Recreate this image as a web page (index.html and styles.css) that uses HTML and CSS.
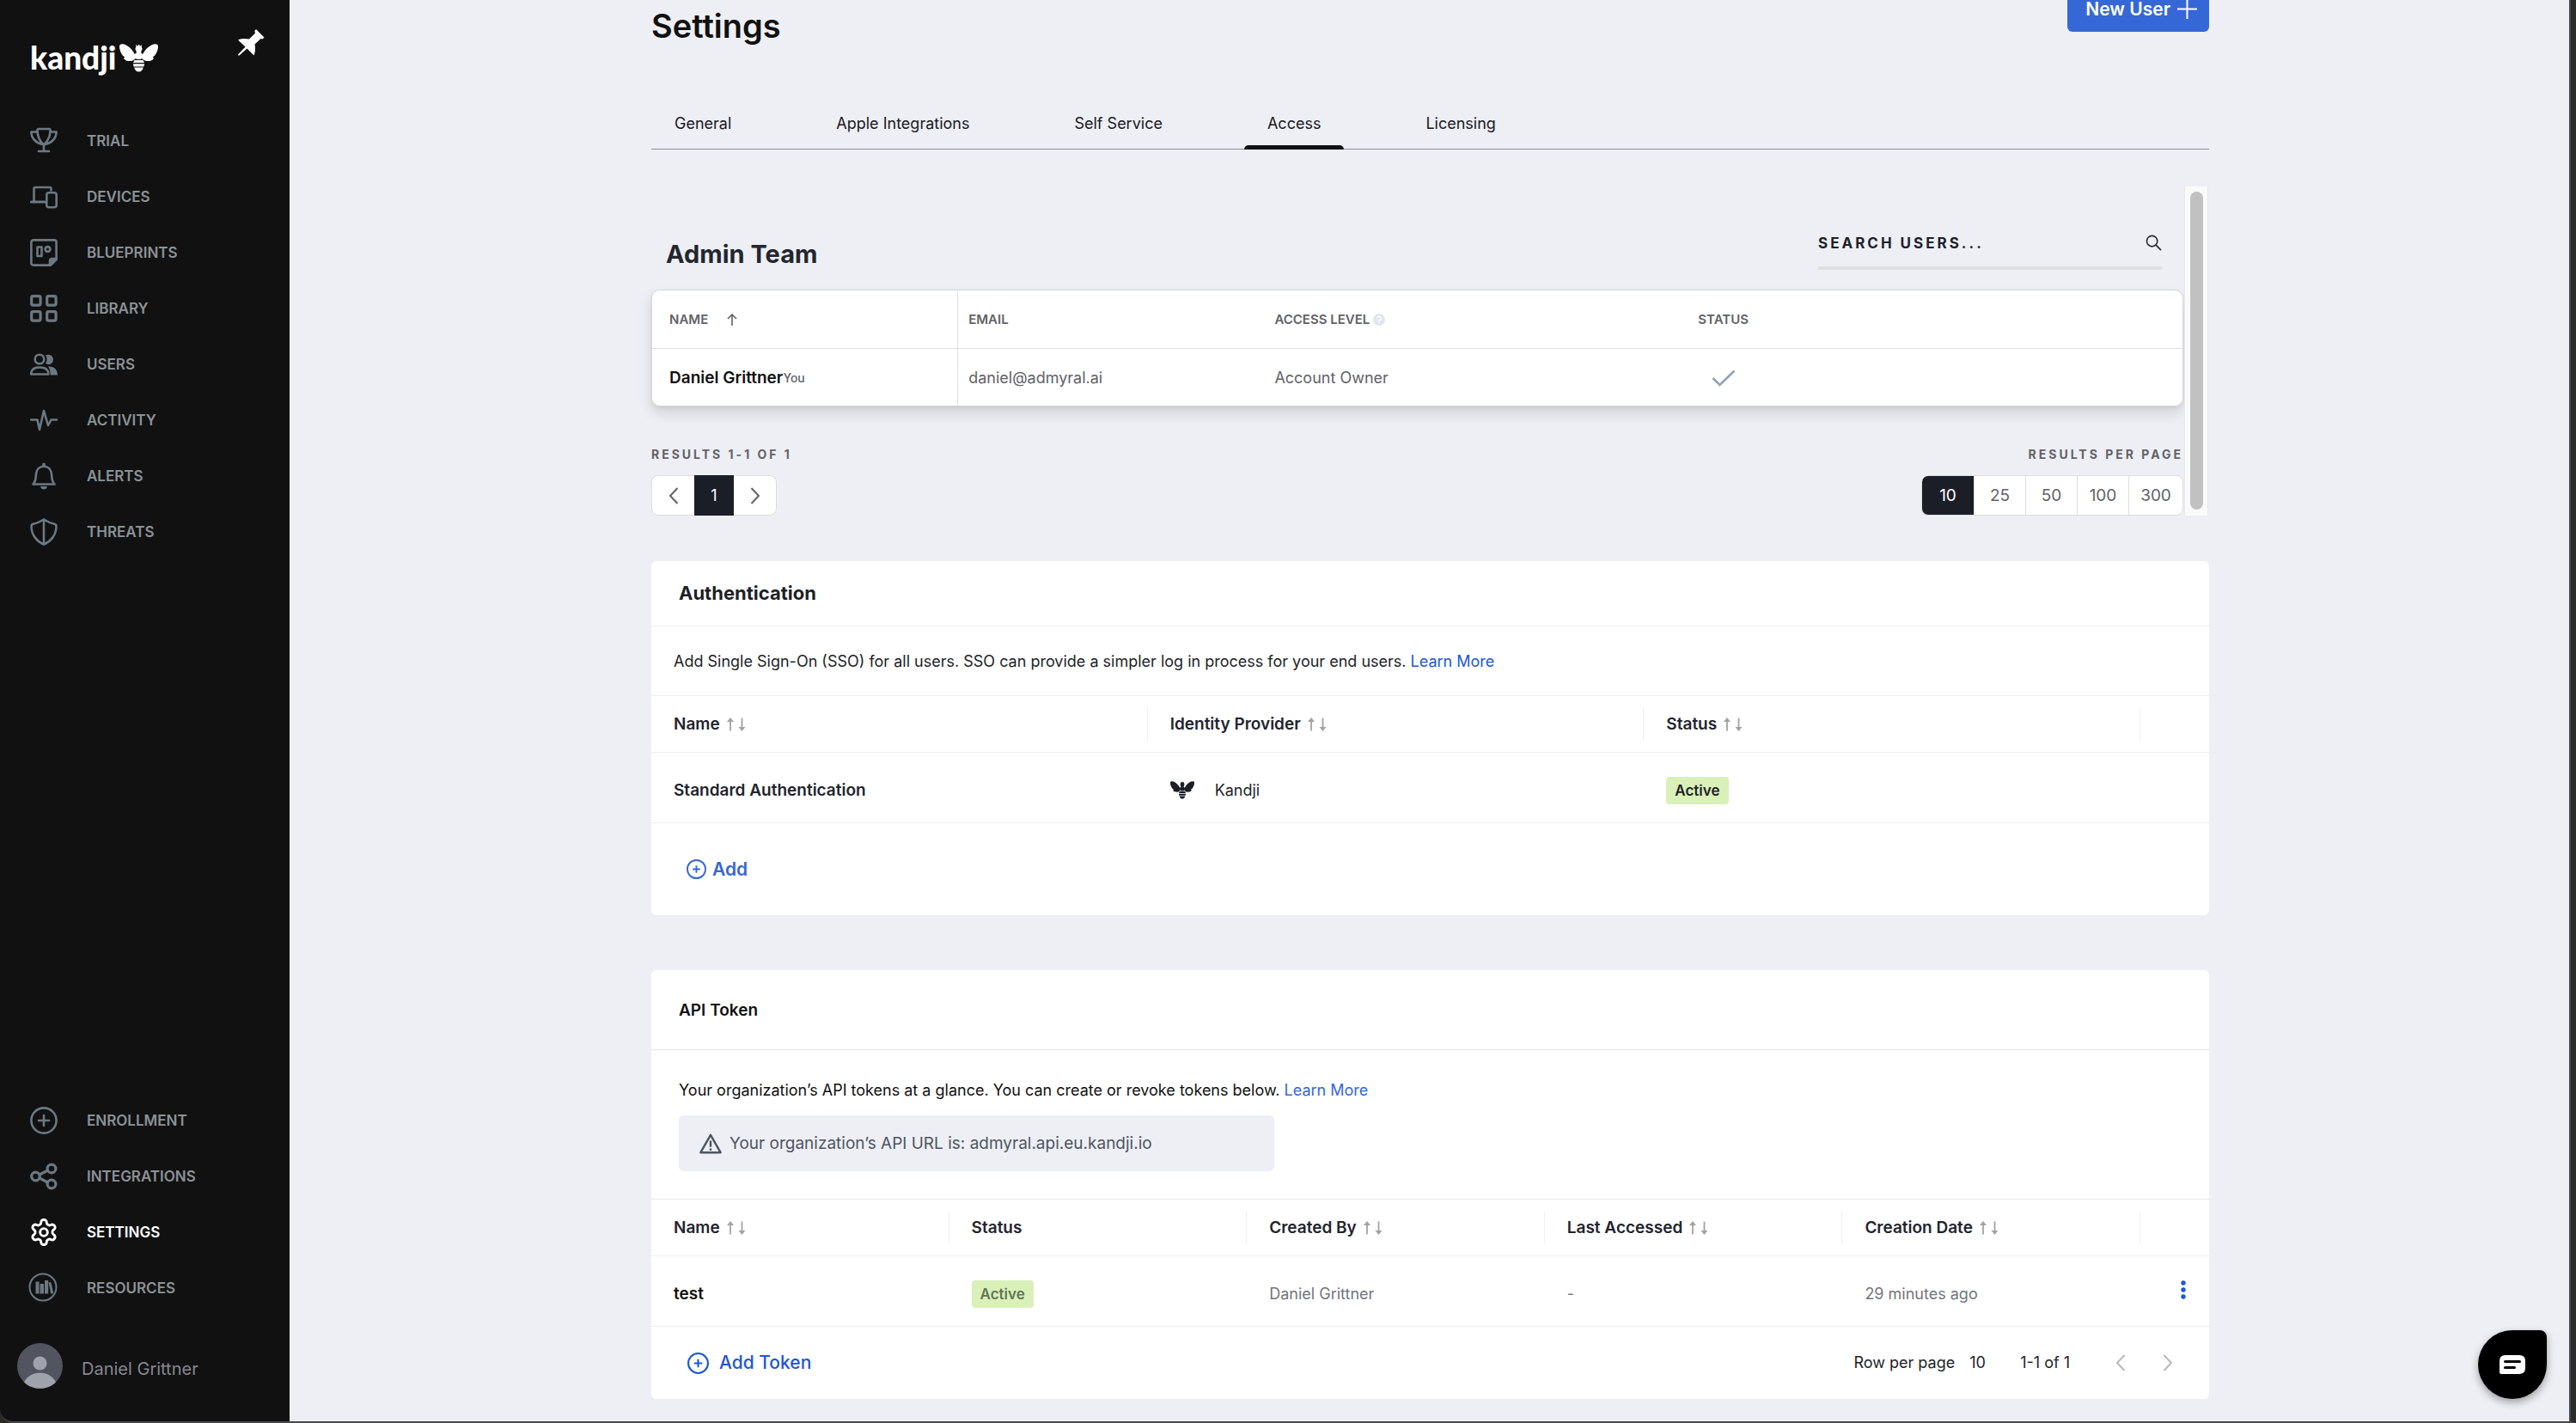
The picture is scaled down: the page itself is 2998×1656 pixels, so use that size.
FILE: index.html
```html
<!DOCTYPE html>
<html lang="en">
<head>
<meta charset="utf-8">
<meta name="viewport" content="width=device-width, initial-scale=1">
<title>Settings – Access</title>
<link rel="stylesheet" href="styles.css">
</head>
<body>
<svg class="sprite" aria-hidden="true">
  <symbol id="bee" viewBox="0 0 45 33">
    <path d="M0 3C0 .5 2 0 4 .2 10 1 17 8 19 15c.4 2-.5 3-2 3.400-2 2-8 2.600-11-.2-1.500-1.400-.6-2.400.6-2.600C3 14 0 8 0 3ZM45 3c0-2.500-2-3-4-2.800C35 1 28 8 26 15c-.4 2 .5 3 2 3.400 2 2 8 2.600 11-.2 1.500-1.400.6-2.400-.6-2.600C42 14 45 8 45 3Z"/>
    <path d="M19.500.8l1.500 2.200.9-2h1.200l.9 2L25.500.8l.5 4c1 .8.6 2.200-.4 2.800.4 1-.3 2-1 2.400 2 .9 3 2.500 2.500 4.500l-2 3.500h-5.200l-2-3.500c-.5-2 .5-3.600 2.500-4.500-.7-.4-1.400-1.400-1-2.400-1-.6-1.400-2-.4-2.800Z"/>
    <path d="M17.500 19h10l1.500 3H16ZM16 23.200h13l-.5 3.200h-12ZM17.200 27.600h10.600C27 31 25 32.600 22.500 32.600S18 31 17.200 27.600Z"/>
  </symbol>
  <symbol id="sort" viewBox="0 0 22 16">
    <path d="M4 3v12.500M17.500 .5V13" fill="none" stroke="#a3a3a6" stroke-width="1.800"/>
    <path d="M0 5 4 0l4 5ZM13.500 11h8L17.500 16Z" fill="#a3a3a6"/>
  </symbol>
  <symbol id="left" viewBox="0 0 12 20"><path d="M10.500 1 2 10l8.500 9" fill="none" stroke="currentColor" stroke-width="2"/></symbol>
  <symbol id="right" viewBox="0 0 12 20"><path d="M1.500 1 10 10l-8.500 9" fill="none" stroke="currentColor" stroke-width="2"/></symbol>
  <symbol id="plus-circle" viewBox="0 0 24 24"><path d="M12 7.500v9M7.500 12h9M23 12a11 11 0 1 1-22 0 11 11 0 0 1 22 0Z" fill="none" stroke="currentColor" stroke-width="2"/></symbol>
</svg>

<div class="app">
  <aside class="sidebar">
    <div class="brand">
      <a class="logo" href="#">kandji<svg class="logo-bee"><use href="#bee"/></svg></a>
      <button class="pin" type="button" aria-label="Pin menu">
        <svg viewBox="0 0 31 31"><path d="M21 0 30.500 9.500 28.500 11.500 26.500 11 19.500 17.500C20.500 22 20 27 18.500 30.500L10.500 22.500 1.500 30.500.2 30.500.2 29.300 8.500 20.500 0 12.500C4 10.800 9 10.600 13 11.500L20 4.500 19.300 2Z" fill="#fff"/></svg>
      </button>
    </div>
    <nav class="menu" aria-label="Main">
      <a href="#"><svg viewBox="0 0 32 32"><path d="M8.500 3.200q0-1.200 1.200-1.200h12.600q1.200 0 1.200 1.200C23.500 12 20 17 16 20.500 12 17 8.500 12 8.500 3.200ZM8.500 5.500H1.400C1.400 13 7 18.500 14.500 20M23.500 5.500h7.100C30.600 13 25 18.500 17.500 20M16 20.500V28M10 28h12"/></svg>TRIAL</a>
      <a href="#"><svg viewBox="0 0 32 32"><path d="M4.500 20.500V6.500q0-1.500 1.500-1.500h17q1.500 0 1.500 1.500V8.500"/><path d="M1.500 22H17" stroke-width="3.200"/><rect x="19.300" y="11.300" width="11.400" height="17" rx="2.500"/></svg>DEVICES</a>
      <a href="#"><svg viewBox="0 0 32 32"><path d="M4 1.400h24q2.600 0 2.600 2.600v20L24 30.600H4Q1.400 30.600 1.400 28V4Q1.400 1.400 4 1.400ZM8.500 9.500h5v10.500h-5Z"/><circle cx="20.500" cy="12" r="2.900"/><path d="M30.600 23 23 30.600V25.500Q23 23 25.500 23Z" class="solid"/></svg>BLUEPRINTS</a>
      <a href="#"><svg class="bold" viewBox="0 0 32 32"><rect x="1.700" y="1.700" width="10.400" height="10.400" rx="1.800"/><rect x="19.700" y="1.700" width="10.400" height="10.400" rx="1.800"/><rect x="1.700" y="19.700" width="10.400" height="10.400" rx="1.800"/><rect x="19.700" y="19.700" width="10.400" height="10.400" rx="1.800"/></svg>LIBRARY</a>
      <a href="#"><svg viewBox="0 0 32 32"><circle cx="11" cy="10" r="5.300"/><path d="M1.200 27.500C1.200 22 5 19.500 11 19.500s10.300 2.500 10.300 8Z"/><path class="solid" stroke="none" d="M18 5.500c5-2.500 9 1 9 5s-4.500 7.500-9 4.500q1.500-2 1.500-4.800T18 5.500ZM21 18.500c7-.5 11 3.500 11 10h-8.500c.3-4-.5-7-2.500-10Z"/></svg>USERS</a>
      <a href="#"><svg viewBox="0 0 32 32"><path d="M1.200 15.500H8.500L11 27 16 5l5 17 3.500-6.500H31"/></svg>ACTIVITY</a>
      <a href="#"><svg viewBox="0 0 32 32"><path d="M3.500 25.500C7 22 6.500 18 7 13.500 7.500 8 11 4.800 16 4.800s8.500 3.200 9 8.700c.5 4.500 0 8.500 3.500 12Z"/><path class="solid" stroke="none" d="M14 4.500q0-4 2-4t2 4ZM12 28h8q-1 3.600-4 3.600T12 28Z"/></svg>ALERTS</a>
      <a href="#"><svg viewBox="0 0 32 32"><path d="M16 1.500C12 4 7.500 5.800 3.800 6.800 1.500 7.500 1.500 8 1.600 11 2 19.500 7.500 27 16 30.600 24.500 27 30 19.500 30.400 11c.1-3 .1-3.500-2.200-4.200C24.500 5.800 20 4 16 1.500ZM16 1.500V30.600"/></svg>THREATS</a>
    </nav>
    <nav class="menu menu-bottom" aria-label="Secondary">
      <a href="#"><svg viewBox="0 0 32 32"><circle cx="16" cy="16" r="14.600"/><path d="M16 10v12M10 16h12"/></svg>ENROLLMENT</a>
      <a href="#"><svg class="bold" viewBox="0 0 32 32"><circle cx="6.500" cy="16" r="4.800"/><circle cx="25" cy="7" r="4.900"/><circle cx="25" cy="25" r="4.900"/><path d="M11 14l9.500-5M11 18l9.500 5"/></svg>INTEGRATIONS</a>
      <a href="#" class="current" aria-current="page"><svg viewBox="1 1 22 22"><path d="M12.220 2h-.44a2 2 0 0 0-2 2v.18a2 2 0 0 1-1 1.730l-.43.25a2 2 0 0 1-2 0l-.15-.08a2 2 0 0 0-2.730.73l-.22.38a2 2 0 0 0 .73 2.730l.15.1a2 2 0 0 1 1 1.720v.51a2 2 0 0 1-1 1.740l-.15.09a2 2 0 0 0-.73 2.730l.22.38a2 2 0 0 0 2.730.73l.15-.08a2 2 0 0 1 2 0l.43.25a2 2 0 0 1 1 1.730V20a2 2 0 0 0 2 2h.44a2 2 0 0 0 2-2v-.18a2 2 0 0 1 1-1.730l.43-.25a2 2 0 0 1 2 0l.15.08a2 2 0 0 0 2.730-.73l.22-.39a2 2 0 0 0-.73-2.730l-.15-.08a2 2 0 0 1-1-1.740v-.5a2 2 0 0 1 1-1.740l.15-.09a2 2 0 0 0 .73-2.730l-.22-.38a2 2 0 0 0-2.730-.73l-.15.08a2 2 0 0 1-2 0l-.43-.25a2 2 0 0 1-1-1.730V4a2 2 0 0 0-2-2z"/><circle cx="12" cy="12" r="3"/></svg>SETTINGS</a>
      <a href="#"><svg viewBox="0 0 32 32"><circle cx="15" cy="15" r="15.500" stroke-width="2"/><path class="solid" stroke="none" d="M6.500 8.500h4V22.500h-4ZM11.500 11h4.500V22.500h-4.500ZM17 7h4.200V22.500H17ZM21.500 9.500l2.800-.6 3 13-3 .8Z"/></svg>RESOURCES</a>
    </nav>
    <a class="user" href="#">
      <svg viewBox="0 0 53 53"><circle cx="26.500" cy="26.500" r="26.500" fill="#525460"/><circle cx="26.500" cy="23.500" r="8" fill="#9fa1ab"/><path d="M8 45.500C12 38 19 34.500 26.500 34.500S41 38 45 45.500C35 55.300 18 55.300 8 45.500Z" fill="#9fa1ab"/></svg>
      <span>Daniel Grittner</span>
    </a>
  </aside>

  <main class="main">
    <div class="content">
      <header class="page-head">
        <h1>Settings</h1>
        <button class="new-user" type="button">New User<svg viewBox="0 0 23 23"><path d="M11.500 0v23M0 11.500h23" stroke="#fff" stroke-width="2"/></svg></button>
      </header>

      <nav class="tabs" aria-label="Settings sections">
        <a href="#">General</a>
        <a href="#">Apple Integrations</a>
        <a href="#">Self Service</a>
        <a href="#" class="active" aria-current="page">Access</a>
        <a href="#">Licensing</a>
      </nav>

      <section class="team">
        <div class="team-body">
          <div class="toolbar">
            <h2>Admin Team</h2>
            <label class="search">
              <input type="search" placeholder="SEARCH USERS..." aria-label="Search users">
              <svg viewBox="0 0 20 20"><circle cx="8" cy="8" r="6.500"/><path d="M12.700 12.700 19 19"/></svg>
            </label>
          </div>
          <table class="team-table">
            <thead>
              <tr>
                <th>NAME<svg class="asc" viewBox="0 0 12 14"><path d="M6 14V1M1 6l5-5 5 5"/></svg></th>
                <th>EMAIL</th>
                <th>ACCESS LEVEL<svg class="help" viewBox="0 0 14 14"><circle cx="7" cy="7" r="7" fill="#dfe6ef"/><path d="M4.900 5.400a2.100 2.100 0 1 1 3 1.900q-.9.500-.9 1.400M7 9.800v1.500" fill="none" stroke="#fff" stroke-width="1.600"/></svg></th>
                <th class="mid">STATUS</th>
                <th></th>
              </tr>
            </thead>
            <tbody>
              <tr>
                <td><span class="person">Daniel Grittner<small>You</small></span></td>
                <td>daniel@admyral.ai</td>
                <td>Account Owner</td>
                <td class="mid"><svg class="check" viewBox="0 0 28 20"><path d="M1.500 10 9.500 18 26.500 1.500"/></svg></td>
                <td></td>
              </tr>
            </tbody>
          </table>
          <div class="paging">
            <div class="paging-group">
              <span class="caption">RESULTS 1-1 OF 1</span>
              <div class="pager">
                <button type="button" aria-label="Previous page"><svg><use href="#left"/></svg></button>
                <button type="button" class="on">1</button>
                <button type="button" aria-label="Next page"><svg><use href="#right"/></svg></button>
              </div>
            </div>
            <div class="paging-group end">
              <span class="caption">RESULTS PER PAGE</span>
              <div class="sizes">
                <button type="button" class="on">10</button>
                <button type="button">25</button>
                <button type="button">50</button>
                <button type="button">100</button>
                <button type="button">300</button>
              </div>
            </div>
          </div>
        </div>
        <div class="track"><div class="thumb"></div></div>
      </section>

      <section class="card auth">
        <h2>Authentication</h2>
        <p class="lead">Add Single Sign-On (SSO) for all users. SSO can provide a simpler log in process for your end users. <a href="#">Learn More</a></p>
        <table class="grid">
          <thead>
            <tr>
              <th><button type="button">Name<svg><use href="#sort"/></svg></button></th>
              <th><button type="button">Identity Provider<svg><use href="#sort"/></svg></button></th>
              <th><button type="button">Status<svg><use href="#sort"/></svg></button></th>
              <th class="tail"></th>
            </tr>
          </thead>
          <tbody>
            <tr>
              <td class="strong">Standard Authentication</td>
              <td><span class="provider"><svg><use href="#bee"/></svg>Kandji</span></td>
              <td><span class="badge">Active</span></td>
              <td></td>
            </tr>
          </tbody>
        </table>
        <div class="auth-foot">
          <button class="add" type="button"><svg><use href="#plus-circle"/></svg>Add</button>
        </div>
      </section>

      <section class="card api">
        <h2>API Token</h2>
        <div class="api-intro">
          <p>Your organization’s API tokens at a glance. You can create or revoke tokens below. <a href="#">Learn More</a></p>
          <div class="notice">
            <svg viewBox="0 0 26 24"><path d="M13 1.800 24.600 22.200H1.400ZM13 8.500v7.200M13 17.500v2.400"/></svg>
            Your organization’s API URL is: admyral.api.eu.kandji.io
          </div>
        </div>
        <table class="grid muted">
          <thead>
            <tr>
              <th><button type="button">Name<svg><use href="#sort"/></svg></button></th>
              <th>Status</th>
              <th><button type="button">Created By<svg><use href="#sort"/></svg></button></th>
              <th><button type="button">Last Accessed<svg><use href="#sort"/></svg></button></th>
              <th><button type="button">Creation Date<svg><use href="#sort"/></svg></button></th>
              <th class="tail"></th>
            </tr>
          </thead>
          <tbody>
            <tr>
              <td class="strong">test</td>
              <td><span class="badge">Active</span></td>
              <td>Daniel Grittner</td>
              <td>-</td>
              <td>29 minutes ago</td>
              <td class="actions"><button type="button" aria-label="Token actions"><svg viewBox="0 0 6 22"><circle cx="3" cy="3" r="2.700"/><circle cx="3" cy="11" r="2.700"/><circle cx="3" cy="19" r="2.700"/></svg></button></td>
            </tr>
          </tbody>
        </table>
        <div class="api-foot">
          <button class="add-token" type="button"><svg><use href="#plus-circle"/></svg>Add Token</button>
          <div class="rows">
            <label for="rows">Row per page</label>
            <select id="rows"><option>10</option></select>
            <span class="range">1-1 of 1</span>
            <button type="button" aria-label="Previous page"><svg><use href="#left"/></svg></button>
            <button type="button" aria-label="Next page"><svg><use href="#right"/></svg></button>
          </div>
        </div>
      </section>
    </div>
  </main>
</div>

<button class="chat" type="button" aria-label="Open chat">
  <svg viewBox="0 0 30 22"><path d="M7 0h16q7 0 7 7v8q0 7-7 7H2q-2 0-2-2V7Q0 0 7 0Z" fill="#fff"/><path d="M6.500 7.500h17M6.500 14.500h11" stroke="#000" stroke-width="3" stroke-linecap="round"/></svg>
</button>
</body>
</html>
```
FILE: styles.css
```css
* { box-sizing: border-box; }

body {
  margin: 0;
  background: #2b2a22;
  color: #1d1f27;
  font: 400 18px/24px Inter, "Liberation Sans", sans-serif;
}

h1, h2, p { margin: 0; }
a { color: #2257d6; text-decoration: none; }
button, input, select { font: inherit; color: inherit; margin: 0; padding: 0; border: 0; background: none; }
button { cursor: pointer; }
svg { display: block; flex: none; }
.sprite { position: absolute; width: 0; height: 0; }

.app {
  display: flex;
  min-height: 100vh;
  border-bottom: 2px solid #4a4a4c;
  border-right: 6px solid #2b2b2b;
  border-bottom-left-radius: 16px;
  overflow: hidden;
}

/* Sidebar */
.sidebar {
  display: flex;
  flex-direction: column;
  flex: none;
  width: 337px;
  padding: 44px 29px 38px 0;
  background: #111;
}
.brand { display: flex; justify-content: space-between; align-items: flex-start; padding-left: 35px; }
.logo { display: flex; align-items: center; gap: 4px; color: #fff; font: 900 37px/46px Lato, sans-serif; }
.logo-bee { width: 45px; height: 33px; fill: #fff; }
.pin { margin-top: -10px; }
.pin svg { width: 31px; height: 31px; }
.menu { margin-top: 41px; padding-left: 35px; }
.menu a {
  display: flex;
  align-items: center;
  gap: 34px;
  height: 65px;
  color: #8c9297;
  font-size: 17px;
  font-weight: 600;
}
.menu svg {
  width: 32px;
  height: 32px;
  fill: none;
  stroke: #6c7882;
  stroke-width: 2.6;
  stroke-linejoin: round;
  stroke-linecap: round;
  overflow: visible;
}
.menu .bold { stroke-width: 3.2; }
.menu .solid { fill: #6c7882; }
.menu a.current { color: #fff; }
.menu .current svg { stroke: #fff; stroke-width: 2; }
.menu-bottom { margin-top: auto; }
.user { display: flex; align-items: center; gap: 22px; margin-top: 32px; padding-left: 20px; color: #868790; font-size: 20px; }
.user svg { width: 53px; height: 53px; }
.user span { padding-top: 7px; }

/* Page */
.main { flex: 1; padding: 0 40px 26px 42px; background: #eeeff5; border-right: 2px solid #454547; }
.content { max-width: 1813px; margin: 0 auto; }

.page-head { display: flex; justify-content: space-between; align-items: flex-start; height: 53px; margin-top: -16px; }
.page-head h1 { padding-top: 22px; color: #111; font-size: 38px; font-weight: 600; line-height: 48px; }
.new-user {
  display: flex;
  align-items: center;
  gap: 8px;
  height: 53px;
  padding: 0 14px 0 21px;
  border-radius: 6px;
  background: #3667d6;
  color: #fff;
  font-size: 21px;
  font-weight: 600;
  line-height: 20px;
}
.new-user svg { width: 23px; height: 23px; }

.tabs { display: flex; gap: 68px; margin-top: 95px; border-bottom: 1px solid #8f8f99; }
.tabs a { position: relative; padding: 0 27px 17px; color: #17181c; }
.tabs .active::after {
  content: "";
  position: absolute;
  inset: auto 0 -1px;
  height: 5px;
  border-radius: 5px 5px 0 0;
  background: #111;
}

/* Admin team */
.team { display: flex; margin-top: 43px; }
.team-body { flex: 1; }
.track { width: 28px; margin-left: 1px; margin-right: 1px; padding: 6px 5px 7px 6px; background: #fafafa; border: solid #e8e8e8; border-width: 0 1px; }
.thumb { height: 100%; border-radius: 8px; background: #c1c1c1; }

.toolbar { display: flex; justify-content: space-between; align-items: flex-end; padding: 49px 25px 23px 17px; }
.toolbar h2 { color: #24262f; font-size: 29px; font-weight: 700; line-height: 36px; }
.search { display: flex; justify-content: space-between; width: 400px; padding-bottom: 10px; border-bottom: 4px solid #dfdfdf; }
.search input { flex: 1; min-width: 0; height: 34px; outline: 0; font-size: 17px; font-weight: 700; letter-spacing: 3px; }
.search input::placeholder { color: #1d1f2b; opacity: 1; }
.search svg { width: 19px; height: 19px; margin-top: 7px; fill: none; stroke: #2b2d35; stroke-width: 1.8; }

.team-table {
  width: 100%;
  table-layout: fixed;
  border-spacing: 0;
  border: 1px solid #d6d7dc;
  border-radius: 10px;
  background: #fff;
  color: #626266;
  box-shadow: 0 8px 16px rgba(0, 0, 0, .12), 0 2px 4px rgba(0, 0, 0, .06);
}
.team-table th, .team-table td { padding: 0 12px; text-align: left; white-space: nowrap; }
.team-table th { height: 68px; border-bottom: 1px solid #dddde0; font-size: 15px; font-weight: 600; }
.team-table td { height: 66px; padding-top: 2px; }
.team-table tr > :first-child { padding-left: 20px; border-right: 1px solid #e0e0e3; }
.team-table .mid { text-align: center; }
.team-table th svg { display: inline-block; vertical-align: middle; }
.asc { width: 12px; height: 14px; margin-left: 22px; fill: none; stroke: #626266; stroke-width: 1.6; }
.help { width: 14px; height: 14px; margin-left: 4px; }
.check { width: 28px; height: 20px; margin: 0 auto; fill: none; stroke: #8ea3b8; stroke-width: 2.6; }
.person { display: flex; align-items: center; color: #111; font-size: 19px; font-weight: 600; }
.person small { color: #626266; font-size: 14px; font-weight: 500; line-height: 24px; }

.paging { display: flex; justify-content: space-between; margin-top: 46px; }
.paging-group { display: flex; flex-direction: column; align-items: flex-start; gap: 14px; }
.paging-group.end { align-items: flex-end; }
.caption { color: #626266; font-size: 14px; font-weight: 700; line-height: 20px; letter-spacing: 3px; }
.pager, .sizes { display: flex; height: 47px; border: 1px solid #dcdde0; border-radius: 8px; background: #fff; color: #626266; }
.pager button { width: 49px; }
.pager svg { width: 12px; height: 20px; margin: 0 auto; }
.pager .on { width: 46px; margin: -1px 0; }
.sizes { overflow: hidden; font-size: 19px; }
.sizes button { width: 60px; }
.sizes button + button { border-left: 1px solid #dcdde0; }
.sizes button:last-child { width: 63px; }
.pager .on, .sizes .on { background: #1c1e27; color: #fff; }

/* Cards */
.card { border-radius: 6px; background: #fff; }
.card h2 { padding: 0 32px; border-bottom: 1px solid #efeff1; }
.auth { margin-top: 53px; }
.auth h2 { font-size: 22px; font-weight: 700; line-height: 75px; }
.lead { padding: 29px 26px 27px; border-bottom: 1px solid #efeff1; }
.api { margin-top: 64px; }
.api h2 { padding-top: 2px; border-color: #e5e6ea; color: #111; font-size: 19px; font-weight: 600; line-height: 90px; }
.api-intro { padding: 35px 32px 32px; border-bottom: 1px solid #e5e6ea; color: #111; }
.api-intro a { color: #3667d6; }
.notice {
  display: flex;
  align-items: center;
  gap: 9px;
  max-width: 693px;
  height: 65px;
  margin-top: 17px;
  padding: 0 24px;
  border-radius: 6px;
  background: #eeeff5;
  color: #4d5560;
  font-size: 19px;
}
.notice svg { width: 26px; height: 24px; fill: none; stroke: #4d5560; stroke-width: 2.4; stroke-linejoin: round; }

.grid { width: 100%; table-layout: fixed; border-spacing: 0; }
.grid th, .grid td { padding: 0 26px; border-bottom: 1px solid #efeff1; text-align: left; white-space: nowrap; }
.grid th { height: 66px; background: linear-gradient(#f0f0f2, #f0f0f2) right center / 1px 39px no-repeat; color: #22242d; font-size: 19px; font-weight: 600; }
.grid .tail { width: 80px; background: none; }
.grid td { height: 82px; padding-top: 6px; }
.grid th button { display: flex; align-items: center; gap: 8px; }
.grid th svg { width: 22px; height: 16px; }
.grid .strong { color: #22242d; font-size: 19px; font-weight: 600; }
.provider { display: flex; align-items: center; gap: 24px; }
.provider svg { width: 28px; height: 21px; fill: #1d1f27; }
.badge { display: inline-block; padding: 0 10px; border-radius: 4px; background: #d9f1b8; font-size: 17px; font-weight: 600; line-height: 32px; vertical-align: middle; }
.muted td { color: #74757b; }
.muted .strong { color: #111; }
.muted .badge { color: #63745a; }
.grid .actions { padding: 0 26px 4px 47px; }
.actions button { display: block; }
.actions svg { width: 6px; height: 22px; fill: #1c56d8; }

.auth-foot { display: flex; align-items: center; height: 107px; padding-left: 41px; }
.add { display: flex; align-items: center; gap: 7px; color: #3667d6; font-size: 21px; font-weight: 600; }
.add svg { width: 23px; height: 23px; }
.api-foot { display: flex; align-items: center; justify-content: space-between; height: 84px; padding: 0 42px; }
.add-token { display: flex; align-items: center; gap: 12px; color: #1c56d8; font-size: 21px; font-weight: 500; }
.add-token svg { width: 25px; height: 25px; }
.rows { display: flex; align-items: center; color: #1d1f27; }
.rows select { appearance: none; margin-left: 17px; }
.range { margin-left: 40px; }
.rows button { margin-left: 43px; color: #b9b9bd; }
.rows .range + button { margin-left: 53px; }
.rows svg { width: 12px; height: 20px; }

/* Chat launcher floats over the page */
.chat {
  position: fixed;
  right: 34px;
  bottom: 28px;
  display: grid;
  place-items: center;
  width: 80px;
  height: 80px;
  border-radius: 50% 8px 50% 50%;
  background: #000;
  box-shadow: 0 4px 10px rgba(0, 0, 0, .35);
}
.chat svg { width: 30px; height: 22px; }
```
